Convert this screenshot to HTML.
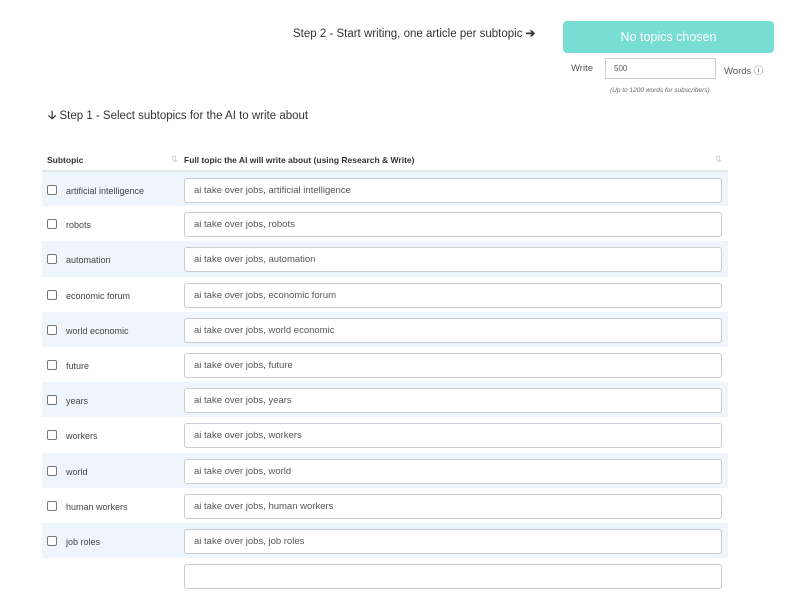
<!DOCTYPE html>
<html><head><style>
*{margin:0;padding:0;box-sizing:border-box}
body{width:800px;height:567px;overflow:hidden;background:#fff;font-family:"Liberation Sans",sans-serif;color:#333;position:relative}
.a{position:absolute}
.btn{left:563px;top:21px;width:211px;height:32px;background:#78ddd3;border-radius:4px;color:#fff;font-size:12.5px;text-align:center;line-height:33px}
table{position:absolute;left:42px;top:150px;width:686px;border-collapse:collapse}
th{font-size:8.5px;font-weight:bold;text-align:left;height:21px;border-bottom:2px solid #e3e8ee;color:#333;position:relative}
td{height:35.2px;font-size:9px;color:#444;padding-top:2px}
tr.o td{background:#eef5fc}
.cb{display:inline-block;width:10px;height:10px;border:1px solid #777;border-radius:2px;vertical-align:-1px;margin:0 9px 0 5px;background:#fff}
.in{width:538px;height:25px;border:1px solid #c9ccd1;border-radius:3px;background:#fff;font-size:9.5px;color:#555;padding-left:9px;line-height:24px}
.s{position:absolute;right:6px;top:4px;color:#ccc;font-size:9px;font-weight:normal}
</style></head><body>
<div class="a" style="left:293px;top:26px;font-size:11.5px;color:#333">Step 2 - Start writing, one article per subtopic <b>➔</b></div>
<div class="a btn">No topics chosen</div>
<div class="a" style="left:571px;top:63px;font-size:9.5px;color:#555">Write</div>
<div class="a" style="left:605px;top:58px;width:111px;height:21px;border:1px solid #ccc;font-size:8px;color:#555;padding:5px 0 0 8px">500</div>
<div class="a" style="left:724px;top:63px;font-size:9.5px;color:#555">Words ⓘ</div>
<div class="a" style="left:610px;top:87px;font-size:6.5px;font-style:italic;color:#666">(Up to 1200 words for subscribers)</div>
<div class="a" style="left:48px;top:108px;font-size:11.5px;color:#333"><b>🡣</b> Step 1 - Select subtopics for the AI to write about</div>
<table>
<tr><th style="width:142px;padding-left:5px">Subtopic<span class="s">⇅</span></th><th>Full topic the AI will write about (using Research &amp; Write)<span class="s">⇅</span></th></tr>
<tr class="o"><td><span class="cb"></span>artificial intelligence</td><td><div class="in">ai take over jobs, artificial intelligence</div></td></tr>
<tr><td><span class="cb"></span>robots</td><td><div class="in">ai take over jobs, robots</div></td></tr>
<tr class="o"><td><span class="cb"></span>automation</td><td><div class="in">ai take over jobs, automation</div></td></tr>
<tr><td><span class="cb"></span>economic forum</td><td><div class="in">ai take over jobs, economic forum</div></td></tr>
<tr class="o"><td><span class="cb"></span>world economic</td><td><div class="in">ai take over jobs, world economic</div></td></tr>
<tr><td><span class="cb"></span>future</td><td><div class="in">ai take over jobs, future</div></td></tr>
<tr class="o"><td><span class="cb"></span>years</td><td><div class="in">ai take over jobs, years</div></td></tr>
<tr><td><span class="cb"></span>workers</td><td><div class="in">ai take over jobs, workers</div></td></tr>
<tr class="o"><td><span class="cb"></span>world</td><td><div class="in">ai take over jobs, world</div></td></tr>
<tr><td><span class="cb"></span>human workers</td><td><div class="in">ai take over jobs, human workers</div></td></tr>
<tr class="o"><td><span class="cb"></span>job roles</td><td><div class="in">ai take over jobs, job roles</div></td></tr>
<tr><td></td><td><div class="in"></div></td></tr>
</table>
</body></html>
